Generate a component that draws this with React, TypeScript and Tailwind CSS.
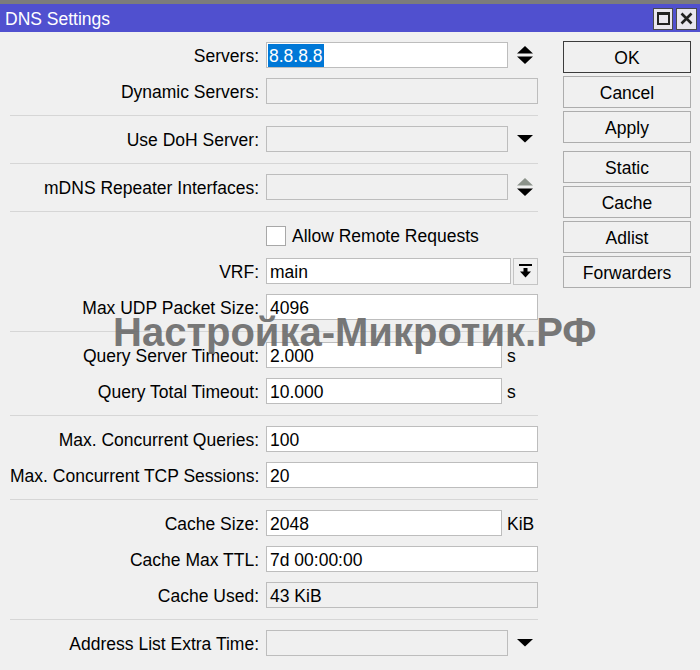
import React from "react";

const UpDown = ({ upDisabled = false }: { upDisabled?: boolean }) => (
  <svg width="16" height="18" viewBox="0 0 16 18" className="block">
    <polygon points="8,0 16,7.5 0,7.5" fill={upDisabled ? "#8c938b" : "#000"} />
    <polygon points="0,10.5 16,10.5 8,18" fill="#000" />
  </svg>
);

const Down = () => (
  <svg width="16" height="8" viewBox="0 0 16 8" className="block">
    <polygon points="0,0 16,0 8,7.5" fill="#000" />
  </svg>
);

const Sep = () => <div className="h-[2px] border-b border-[#d6d6d6]" />;

const Row = ({ label, children }: { label: string; children: React.ReactNode }) => (
  <div className="flex items-center h-[26px]">
    <div className="w-[249px] text-right whitespace-nowrap leading-none pt-[3px]">{label}</div>
    <div className="ml-[7px] flex items-center h-[26px]">{children}</div>
  </div>
);

const Field = ({
  value,
  w,
  disabled = false,
  children,
}: {
  value?: string;
  w: string;
  disabled?: boolean;
  children?: React.ReactNode;
}) => (
  <div
    className={`${w} h-[26px] border border-[#bdbdbd] flex items-center pl-[3px] pt-[3px] whitespace-nowrap overflow-hidden leading-none ${
      disabled ? "bg-[#f0f0f0]" : "bg-white"
    }`}
  >
    {children ?? value}
  </div>
);

const Btn = ({ label, primary = false }: { label: string; primary?: boolean }) => (
  <div
    className={`h-[32px] w-[128px] flex items-center justify-center bg-[#f0f0f0] border pt-[3px] leading-none ${
      primary ? "border-[#3c3c3c]" : "border-[#adadad]"
    }`}
  >
    {label}
  </div>
);

export default function App() {
  return (
    <div className="w-[700px] h-[670px] bg-[#f0f0f0] relative overflow-hidden font-['Liberation_Sans',Arial,sans-serif] text-[17.5px] text-black">
      <div className="h-[4px] bg-[#7c7c7c]" />
      <div className="h-[28px] bg-[#5050cf] flex items-center justify-between pl-[5px] pr-[3px]">
        <span className="text-white leading-none pt-[4px]">DNS Settings</span>
        <div className="flex gap-[3px] mt-[1px]">
          <div className="w-[20px] h-[22px] bg-[#e9e6ee] border border-[#4a4a4a] flex items-center justify-center">
            <div className="w-[13px] h-[13px] border-[2px] border-t-[3px] border-[#222]" />
          </div>
          <div className="w-[21px] h-[22px] bg-[#e9e6ee] border border-[#4a4a4a] flex items-center justify-center">
            <svg width="13" height="13" viewBox="0 0 13 13">
              <path d="M1.5 1.5 L11.5 11.5 M11.5 1.5 L1.5 11.5" stroke="#222" strokeWidth="2.6" />
            </svg>
          </div>
        </div>
      </div>

      <div className="flex pl-[10px] pt-[10px]">
        <div className="w-[528px] flex flex-col gap-[10px]">
          <Row label="Servers:">
            <Field w="w-[242px]">
              <span className="bg-[#0078d7] text-white px-[1px] -ml-[2px] -mt-[3px] leading-[21px] pt-[2px]">8.8.8.8</span>
            </Field>
            <div className="ml-[9px]">
              <UpDown />
            </div>
          </Row>
          <Row label="Dynamic Servers:">
            <Field w="w-[272px]" disabled />
          </Row>
          <Sep />
          <Row label="Use DoH Server:">
            <Field w="w-[242px]" disabled />
            <div className="ml-[9px]">
              <Down />
            </div>
          </Row>
          <Sep />
          <Row label="mDNS Repeater Interfaces:">
            <Field w="w-[242px]" disabled />
            <div className="ml-[9px]">
              <UpDown upDisabled />
            </div>
          </Row>
          <Sep />
          <Row label="">
            <div className="w-[20px] h-[20px] bg-white border border-[#a8a8a8] mt-[2px]" />
            <span className="ml-[6px] pt-[4px] leading-none">Allow Remote Requests</span>
          </Row>
          <Row label="VRF:">
            <Field w="w-[245px]" value="main" />
            <div className="ml-[2px] w-[25px] h-[27px] bg-[#f0f0f0] border border-[#c4c4c4] flex items-center justify-center">
              <svg width="13" height="14" viewBox="0 0 13 14">
                <rect x="0" y="0" width="13" height="2" fill="#000" />
                <rect x="4.5" y="4" width="4" height="4" fill="#000" />
                <polygon points="1,7.5 12,7.5 6.5,13.5" fill="#000" />
              </svg>
            </div>
          </Row>
          <Row label="Max UDP Packet Size:">
            <Field w="w-[272px]" value="4096" />
          </Row>
          <Sep />
          <Row label="Query Server Timeout:">
            <Field w="w-[236px]" value="2.000" />
            <span className="ml-[5px] pt-[3px] leading-none">s</span>
          </Row>
          <Row label="Query Total Timeout:">
            <Field w="w-[236px]" value="10.000" />
            <span className="ml-[5px] pt-[3px] leading-none">s</span>
          </Row>
          <Sep />
          <Row label="Max. Concurrent Queries:">
            <Field w="w-[272px]" value="100" />
          </Row>
          <Row label="Max. Concurrent TCP Sessions:">
            <Field w="w-[272px]" value="20" />
          </Row>
          <Sep />
          <Row label="Cache Size:">
            <Field w="w-[236px]" value="2048" />
            <span className="ml-[5px] pt-[3px] leading-none">KiB</span>
          </Row>
          <Row label="Cache Max TTL:">
            <Field w="w-[272px]" value="7d 00:00:00" />
          </Row>
          <Row label="Cache Used:">
            <Field w="w-[272px]" value="43 KiB" disabled />
          </Row>
          <Sep />
          <Row label="Address List Extra Time:">
            <Field w="w-[242px]" disabled />
            <div className="ml-[9px]">
              <Down />
            </div>
          </Row>
        </div>

        <div className="ml-[25px] -mt-[1px] flex flex-col">
          <div className="flex flex-col gap-[3px]">
            <Btn label="OK" primary />
            <Btn label="Cancel" />
            <Btn label="Apply" />
          </div>
          <div className="flex flex-col gap-[3px] mt-[8px]">
            <Btn label="Static" />
            <Btn label="Cache" />
            <Btn label="Adlist" />
            <Btn label="Forwarders" />
          </div>
        </div>
      </div>

      <div className="absolute left-[113px] top-[312px] text-[40px] font-bold leading-none text-[#6a6a6a] opacity-90 whitespace-nowrap pointer-events-none">
        Настройка-Микротик.РФ
      </div>
    </div>
  );
}
